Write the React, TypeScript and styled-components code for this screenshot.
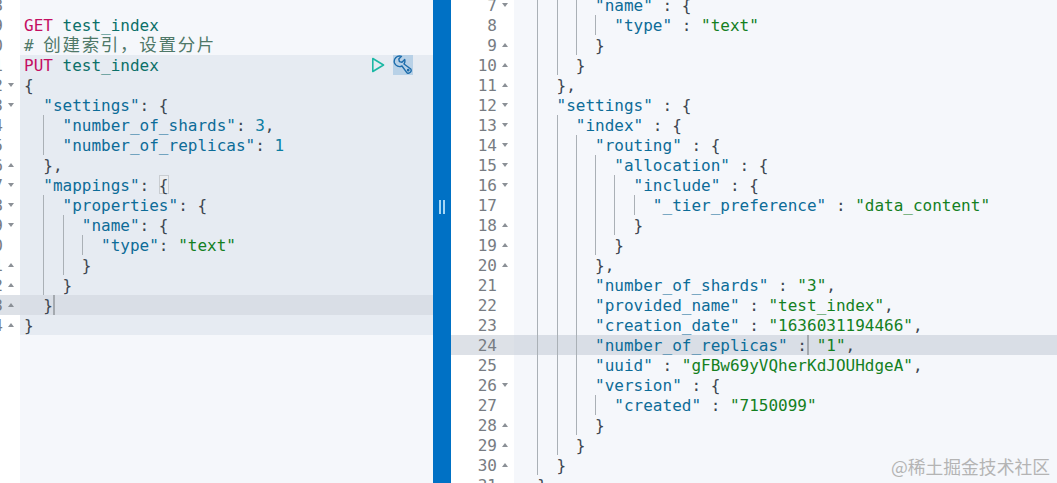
import React from 'react';
import styled, { createGlobalStyle } from 'styled-components';

type Kind = 'key' | 'punct' | 'str' | 'num' | 'method' | 'url' | 'comment' | 'cjk' | 'match' | 'caret';
type Token = [Kind, string?];
type Fold = 'open' | 'close' | undefined;
type Tone = 'plain' | 'selected' | 'active';

interface CodeLine {
    n: number;
    fold?: Fold;
    col: number;
    tokens: Token[];
    tone?: Tone;
}

const colors: Record<string, string> = {
    key: '#0d6c98',
    punct: '#3d4650',
    str: '#14801f',
    num: '#0b7ea3',
    method: '#c40f62',
    url: '#0c7069',
    comment: '#4f7868',
    cjk: '#4f7868',
    match: '#3d4650',
};

const GlobalStyle = createGlobalStyle`
    html, body {
        margin: 0;
        padding: 0;
        height: 100%;
        overflow: hidden;
        background: #fff;
    }
`;

const Page = styled.div`
    position: relative;
    display: flex;
    width: 1057px;
    height: 483px;
    overflow: hidden;
    font-family: "DejaVu Sans Mono", "Liberation Mono", "Noto Sans CJK SC", monospace;
    font-size: 16px;
`;

const Pane = styled.div<{ $width?: number }>`
    position: relative;
    display: flex;
    flex: ${(p) => (p.$width ? `0 0 ${p.$width}px` : '1 1 0')};
    min-width: 0;
    overflow: hidden;
`;

const Gutter = styled.div<{ $width: number }>`
    flex: 0 0 ${(p) => p.$width}px;
    margin-top: -5px;
    background: #fff;
    overflow: hidden;
`;

const GutterCell = styled.div<{ $active?: boolean }>`
    display: flex;
    align-items: center;
    justify-content: flex-end;
    height: 20px;
    padding-right: 6px;
    color: #777c82;
    background: ${(p) => (p.$active ? '#dde1e7' : 'transparent')};
`;

const LineNo = styled.span`
    flex-shrink: 0;
    height: 20px;
    line-height: 22px;
    margin-right: 5px;
`;

const FoldMark = styled.span<{ $fold?: Fold }>`
    flex: 0 0 auto;
    width: 0;
    height: 0;
    border-left: 3.5px solid transparent;
    border-right: 3.5px solid transparent;
    border-top: ${(p) => (p.$fold === 'open' ? '4px solid #8b9096' : 'none')};
    border-bottom: ${(p) => (p.$fold === 'close' ? '4px solid #8b9096' : 'none')};
    visibility: ${(p) => (p.$fold ? 'visible' : 'hidden')};
`;

const Code = styled.div`
    flex: 1 1 0;
    min-width: 0;
    margin-top: -5px;
    background: #f5f7fb;
    overflow: hidden;
`;

const toneBg: Record<Tone, string> = {
    plain: 'transparent',
    selected: '#e6ebf2',
    active: '#d9dee6',
};

const Line = styled.div<{ $tone: Tone; $pad: number }>`
    display: flex;
    height: 20px;
    line-height: 22px;
    padding-left: ${(p) => p.$pad}px;
    white-space: pre;
    background: ${(p) => toneBg[p.$tone]};
`;

const Guide = styled.span<{ $on: boolean }>`
    flex: 0 0 19.27px;
    height: 20px;
    box-sizing: border-box;
    border-left: 1px solid ${(p) => (p.$on ? '#aab0b6' : 'transparent')};
`;

const Tok = styled.span<{ $kind: Kind }>`
    color: ${(p) => colors[p.$kind]};
    ${(p) =>
        p.$kind === 'cjk' &&
        `
        font-size: 17.5px;
        line-height: 20px;
        letter-spacing: 1.7px;
    `}
    ${(p) =>
        p.$kind === 'match' &&
        `
        height: 19px;
        background: #eceef1;
        box-shadow: inset 0 0 0 1px #c9cdd2;
    `}
`;

const Caret = styled.span`
    flex: 0 0 0;
    height: 20px;
    border-left: 2px solid #a4a9af;
    margin-right: -2px;
`;

const Divider = styled.div`
    flex: 0 0 18px;
    display: flex;
    justify-content: center;
    gap: 2px;
    padding-top: 200px;
    box-sizing: border-box;
    background: #0071c5;
`;

const GripBar = styled.span`
    width: 2px;
    height: 14px;
    background: #a5d6f5;
`;

const Actions = styled.div`
    position: absolute;
    top: 55px;
    left: 368px;
    display: flex;
    align-items: center;
    gap: 5px;
`;

const PlayButton = styled.button`
    display: flex;
    width: 20px;
    height: 20px;
    padding: 0;
    border: 0;
    background: transparent;
`;

const WrenchButton = styled(PlayButton)`
    background: #b8d1e7;
`;

const Watermark = styled.div`
    position: absolute;
    right: 7px;
    bottom: 7px;
    font-family: "Noto Sans CJK SC", sans-serif;
    font-size: 17.8px;
    line-height: 20px;
    color: #b4b4b4;
`;

const q = (s: string): Token => ['key', `"${s}"`];
const p = (s: string): Token => ['punct', s];
const s = (v: string): Token => ['str', `"${v}"`];

const leftLines: CodeLine[] = [
    { n: 8, col: 0, tokens: [] },
    { n: 9, col: 0, tokens: [['method', 'GET'], p(' '), ['url', 'test_index']] },
    { n: 10, col: 0, tokens: [['comment', '# '], ['cjk', '创建索引，设置分片']] },
    { n: 11, col: 0, tone: 'selected', tokens: [['method', 'PUT'], p(' '), ['url', 'test_index']] },
    { n: 12, col: 0, tone: 'selected', fold: 'open', tokens: [p('{')] },
    { n: 13, col: 2, tone: 'selected', fold: 'open', tokens: [q('settings'), p(': {')] },
    { n: 14, col: 4, tone: 'selected', tokens: [q('number_of_shards'), p(': '), ['num', '3'], p(',')] },
    { n: 15, col: 4, tone: 'selected', tokens: [q('number_of_replicas'), p(': '), ['num', '1']] },
    { n: 16, col: 2, tone: 'selected', fold: 'close', tokens: [p('},')] },
    { n: 17, col: 2, tone: 'selected', fold: 'open', tokens: [q('mappings'), p(': '), ['match', '{']] },
    { n: 18, col: 4, tone: 'selected', fold: 'open', tokens: [q('properties'), p(': {')] },
    { n: 19, col: 6, tone: 'selected', fold: 'open', tokens: [q('name'), p(': {')] },
    { n: 20, col: 8, tone: 'selected', tokens: [q('type'), p(': '), s('text')] },
    { n: 21, col: 6, tone: 'selected', fold: 'close', tokens: [p('}')] },
    { n: 22, col: 4, tone: 'selected', fold: 'close', tokens: [p('}')] },
    { n: 23, col: 2, tone: 'active', fold: 'close', tokens: [p('}'), ['caret']] },
    { n: 24, col: 0, tone: 'selected', fold: 'close', tokens: [p('}')] },
];

const rightLines: CodeLine[] = [
    { n: 7, col: 8, fold: 'open', tokens: [q('name'), p(' : {')] },
    { n: 8, col: 10, tokens: [q('type'), p(' : '), s('text')] },
    { n: 9, col: 8, fold: 'close', tokens: [p('}')] },
    { n: 10, col: 6, fold: 'close', tokens: [p('}')] },
    { n: 11, col: 4, fold: 'close', tokens: [p('},')] },
    { n: 12, col: 4, fold: 'open', tokens: [q('settings'), p(' : {')] },
    { n: 13, col: 6, fold: 'open', tokens: [q('index'), p(' : {')] },
    { n: 14, col: 8, fold: 'open', tokens: [q('routing'), p(' : {')] },
    { n: 15, col: 10, fold: 'open', tokens: [q('allocation'), p(' : {')] },
    { n: 16, col: 12, fold: 'open', tokens: [q('include'), p(' : {')] },
    { n: 17, col: 14, tokens: [q('_tier_preference'), p(' : '), s('data_content')] },
    { n: 18, col: 12, fold: 'close', tokens: [p('}')] },
    { n: 19, col: 10, fold: 'close', tokens: [p('}')] },
    { n: 20, col: 8, fold: 'close', tokens: [p('},')] },
    { n: 21, col: 8, tokens: [q('number_of_shards'), p(' : '), s('3'), p(',')] },
    { n: 22, col: 8, tokens: [q('provided_name'), p(' : '), s('test_index'), p(',')] },
    { n: 23, col: 8, tokens: [q('creation_date'), p(' : '), s('1636031194466'), p(',')] },
    { n: 24, col: 8, tone: 'active', tokens: [q('number_of_replicas'), p(' :'), ['caret'], p(' '), s('1'), p(',')] },
    { n: 25, col: 8, tokens: [q('uuid'), p(' : '), s('gFBw69yVQherKdJOUHdgeA'), p(',')] },
    { n: 26, col: 8, fold: 'open', tokens: [q('version'), p(' : {')] },
    { n: 27, col: 10, tokens: [q('created'), p(' : '), s('7150099')] },
    { n: 28, col: 8, fold: 'close', tokens: [p('}')] },
    { n: 29, col: 6, fold: 'close', tokens: [p('}')] },
    { n: 30, col: 4, fold: 'close', tokens: [p('}')] },
    { n: 31, col: 2, fold: 'close', tokens: [p('}')] },
];

const Editor: React.FC<{ lines: CodeLine[]; gutter: number; pad: number }> = ({ lines, gutter, pad }) => (
    <>
        <Gutter $width={gutter}>
            {lines.map((l) => (
                <GutterCell key={l.n} $active={l.tone === 'active'}>
                    <LineNo>{l.n}</LineNo>
                    <FoldMark $fold={l.fold} />
                </GutterCell>
            ))}
        </Gutter>
        <Code>
            {lines.map((l) => {
                const depth = l.col / 2;
                return (
                    <Line key={l.n} $tone={l.tone || 'plain'} $pad={pad}>
                        {Array.from({ length: depth }, (_, i) => (
                            <Guide key={i} $on={i > 0} />
                        ))}
                        {l.tokens.map(([kind, text], i) =>
                            kind === 'caret' ? <Caret key={i} /> : <Tok key={i} $kind={kind}>{text}</Tok>,
                        )}
                    </Line>
                );
            })}
        </Code>
    </>
);

const App: React.FC = () => (
    <Page>
        <GlobalStyle />
        <Pane $width={433}>
            <Editor lines={leftLines} gutter={20} pad={4} />
            <Actions>
                <PlayButton>
                    <svg width="20" height="20" viewBox="0 0 20 20" fill="none">
                        <path d="M4.8 3.5 L15.5 10 L4.8 16.5 Z" stroke="#1db8a5" strokeWidth="1.6" strokeLinejoin="round" />
                    </svg>
                </PlayButton>
                <WrenchButton>
                    <svg width="20" height="20" viewBox="0 0 20 20" fill="none" stroke="#1c6cab" strokeWidth="1.4" strokeLinejoin="round">
                        <path d="M8.5 1.3 L5.8 4 L6.4 6.6 L9 7.2 L11.7 4.5 A5.4 5.4 0 0 1 11 9 L17.8 14 A2.8 2.8 0 0 1 14 17.8 L9 11 A5.4 5.4 0 0 1 1.5 8 A5.4 5.4 0 0 1 8.5 1.3 Z" />
                        <circle cx="15.2" cy="15.2" r="0.7" />
                    </svg>
                </WrenchButton>
            </Actions>
        </Pane>
        <Divider>
            <GripBar />
            <GripBar />
        </Divider>
        <Pane>
            <Editor lines={rightLines} gutter={63} pad={4} />
        </Pane>
        <Watermark>@稀土掘金技术社区</Watermark>
    </Page>
);

export default App;
